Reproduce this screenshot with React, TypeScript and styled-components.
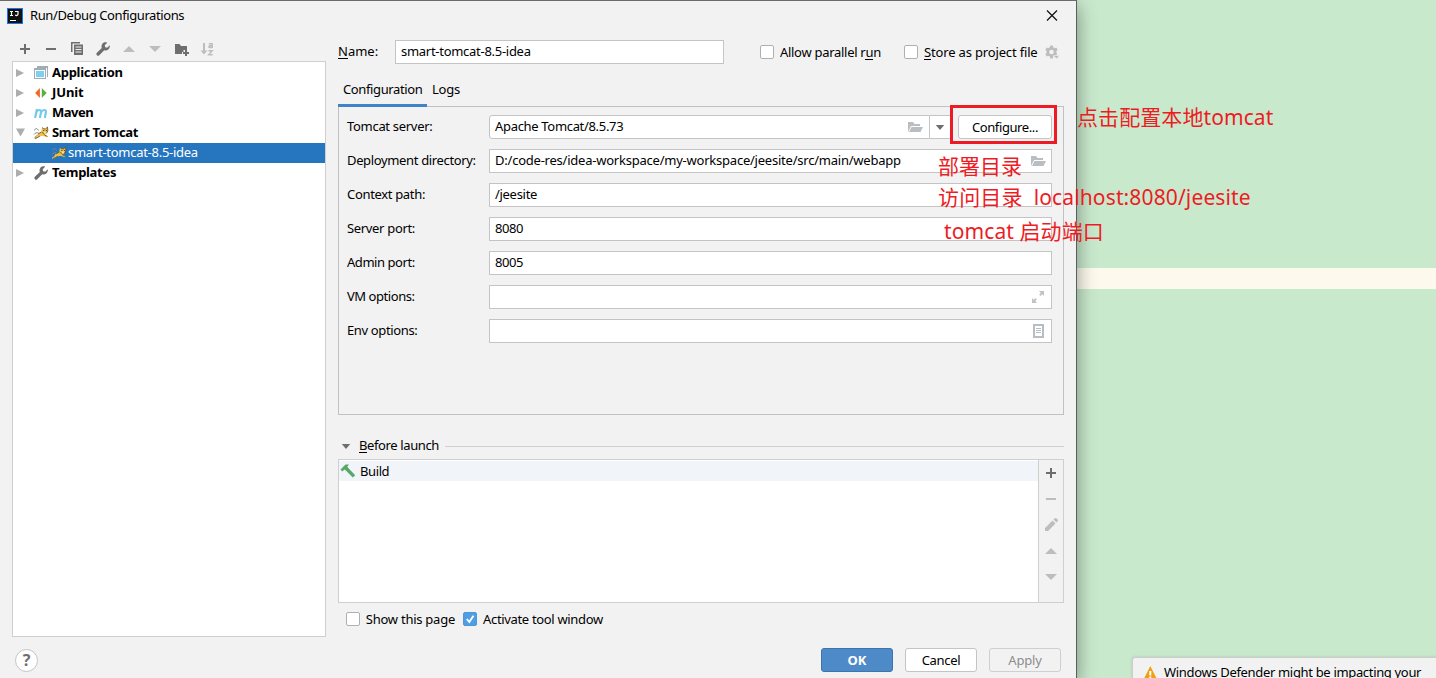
import React from "react";
import styled, { createGlobalStyle } from "styled-components";

const GlobalStyle = createGlobalStyle`
  * { box-sizing: border-box; }
  body {
    margin: 0;
    overflow: hidden;
    background: #c9e9cd;
    color: #000;
    font: 13px/20px "Noto Sans", "Noto Sans CJK SC", sans-serif;
  }
`;

const Screen = styled.div`
  position: relative;
  width: 1436px;
  height: 678px;
  overflow: hidden;
  background: linear-gradient(#fdf9ec, #fdf9ec) 0 268px / 100% 21px no-repeat #c9e9cd;
`;

const Dialog = styled.div`
  display: flex;
  flex-direction: column;
  width: 1077px;
  height: 678px;
  background: #f2f2f2;
  border-top: 1px solid #6b6b6b;
  border-right: 1px solid #566259;
  box-shadow: 0 6px 18px rgba(0, 0, 0, 0.42);
`;

const Text = styled.span<{ $ls?: number; $up?: boolean }>`
  white-space: pre;
  letter-spacing: ${(p) => p.$ls ?? -0.3}px;
  padding-bottom: ${(p) => (p.$up ? 2 : 0)}px;
  u { text-decoration: none; box-shadow: inset 0 -1px #000; display: inline-block; line-height: 15px; }
`;

const TitleBar = styled.div`
  display: flex;
  align-items: center;
  height: 29px;
  flex: none;
  padding: 0 18px 0 7px;
  gap: 7px;
  svg:last-child { margin-left: auto; }
`;

const Main = styled.div`
  display: flex;
  flex: none;
  height: 607px;
  padding-left: 12px;
  gap: 12px;
`;

const Sidebar = styled.div`
  width: 314px;
`;

const Toolbar = styled.div`
  display: flex;
  align-items: center;
  gap: 10px;
  height: 31px;
  padding: 7px 0 0 5px;
`;

const Tree = styled.div`
  height: 576px;
  padding-top: 1px;
  background: #fff;
  border: 1px solid #cfcfcf;
`;

const TreeRow = styled.div<{ $selected?: boolean; $bold?: boolean }>`
  display: flex;
  align-items: center;
  height: 20px;
  padding-left: ${(p) => (p.$selected ? 38 : 2)}px;
  background: ${(p) => (p.$selected ? "#2675bf" : "transparent")};
  color: ${(p) => (p.$selected ? "#fff" : "#000")};
  font-weight: ${(p) => (p.$bold ? 700 : 400)};
`;

const Arrow = styled.span`
  display: flex;
  width: 18px;
`;

const IconSlot = styled.span<{ $w: number; $ml?: number }>`
  display: flex;
  flex: none;
  width: ${(p) => p.$w}px;
  margin-left: ${(p) => p.$ml ?? 0}px;
`;

const Editor = styled.div`
  width: 726px;
  display: flex;
  flex-direction: column;
`;

const NameRow = styled.div`
  display: flex;
  align-items: center;
  height: 24px;
  margin-top: 10px;
  flex: none;
`;

const NameLabel = styled.label`
  display: flex;
  width: 57px;
`;

const Field = styled.div<{ $w?: number; $round?: boolean }>`
  display: flex;
  align-items: center;
  width: ${(p) => p.$w ?? 563}px;
  height: 24px;
  padding: 0 ${(p) => (p.$round ? 6 : 5)}px 0 5px;
  background: #fff;
  border: 1px solid #c4c4c4;
  border-radius: ${(p) => (p.$round ? "3px 0 0 3px" : "0")};
  svg { margin-left: auto; }
`;

const Check = styled.label<{ $w?: number; $ml: number }>`
  display: flex;
  flex: none;
  align-items: center;
  gap: 6px;
  width: ${(p) => (p.$w ? `${p.$w}px` : "auto")};
  margin-left: ${(p) => p.$ml}px;
`;

const Box = styled.span<{ $on?: boolean }>`
  display: flex;
  width: 14px;
  height: 14px;
  border: 1px solid ${(p) => (p.$on ? "#4b97d9" : "#b0b0b0")};
  border-radius: 2px;
  background: ${(p) => (p.$on ? "#4f9ee3" : "#fff")};
`;

const Tabs = styled.div`
  display: flex;
  height: 43px;
  flex: none;
  padding-top: 15px;
`;

const Tab = styled.div<{ $active?: boolean }>`
  position: relative;
  height: 28px;
  width: ${(p) => (p.$active ? 89 : 40)}px;
  padding: 0 0 0 5px;
  border-bottom: ${(p) => (p.$active ? "3px solid #4083c9" : "0")};
`;

const Panel = styled.div`
  flex: none;
  height: 309px;
  margin-top: -1px;
  padding: 8px 11px 0 8px;
  border: 1px solid #c1c1c1;
  display: flex;
  flex-direction: column;
  gap: 10px;
`;

const FormRow = styled.div`
  display: flex;
  align-items: center;
  height: 24px;
`;

const FormLabel = styled.label`
  display: flex;
  width: 142px;
`;

const DropButton = styled.span`
  display: flex;
  width: 23px;
  height: 24px;
  align-items: center;
  padding-left: 5px;
  background: #fff;
  border: 1px solid #c4c4c4;
  border-left: 0;
`;

const Button = styled.button<{ $kind?: "primary" | "disabled"; $w: number }>`
  width: ${(p) => p.$w}px;
  height: 24px;
  padding: 0;
  font: ${(p) => (p.$kind === "primary" ? 700 : 400)} 13px/22px "Noto Sans", sans-serif;
  color: ${(p) => (p.$kind === "primary" ? "#fff" : p.$kind === "disabled" ? "#8c8c8c" : "#000")};
  background: ${(p) => (p.$kind === "primary" ? "#4e8ac8" : p.$kind === "disabled" ? "#f2f2f2" : "#fff")};
  border: 1px solid ${(p) => (p.$kind === "primary" ? "#3d75b1" : p.$kind === "disabled" ? "#cfcfcf" : "#c4c4c4")};
  border-radius: 3px;
`;

const SectionHead = styled.div`
  display: flex;
  align-items: center;
  height: 20px;
  margin-top: 21px;
  flex: none;
  padding-left: 3px;
`;

const Rule = styled.span`
  flex: 1;
  height: 1px;
  margin-left: 6px;
  background: #cfcfcf;
`;

const TaskBox = styled.div`
  display: flex;
  flex: none;
  height: 144px;
  margin-top: 3px;
  border: 1px solid #cfcfcf;
`;

const TaskList = styled.div`
  flex: 1;
  padding-top: 1px;
  background: #fff;
`;

const TaskRow = styled.div`
  display: flex;
  align-items: center;
  height: 20px;
  padding-left: 1px;
  background: #f1f5fa;
`;

const SideTools = styled.div`
  display: flex;
  flex-direction: column;
  align-items: center;
  gap: 10px;
  width: 25px;
  padding-top: 5px;
  border-left: 1px solid #cfcfcf;
`;

const Options = styled.div`
  display: flex;
  align-items: center;
  height: 20px;
  margin-top: 6px;
  flex: none;
`;

const Footer = styled.div`
  display: flex;
  align-items: center;
  gap: 12px;
  height: 24px;
  margin-top: 11px;
  padding: 0 15px;
`;

const Help = styled.span`
  display: flex;
  width: 23px;
  height: 23px;
  margin-right: auto;
  align-items: center;
  justify-content: center;
  border: 1px solid #c4c4c4;
  border-radius: 50%;
  background: #fff;
  color: #6e6e6e;
  font: 700 16px/20px "Noto Sans", sans-serif;
`;

const Note = styled.div<{ $x: number; $y: number; $ls?: number }>`
  position: absolute;
  left: ${(p) => p.$x}px;
  top: ${(p) => p.$y}px;
  color: #ed1c24;
  white-space: pre;
  font: 21px/30px "Noto Sans", "Noto Sans CJK SC", sans-serif;
  letter-spacing: ${(p) => p.$ls ?? 0}px;
`;

const Highlight = styled.div`
  position: absolute;
  left: 950px;
  top: 105px;
  width: 107px;
  height: 39px;
  border: 3px solid #ed1c24;
`;

const Toast = styled.div`
  position: absolute;
  left: 1132px;
  top: 657px;
  width: 320px;
  height: 60px;
  display: flex;
  gap: 6px;
  padding: 4px 0 0 9px;
  background: #f2f2f2;
  border: 1px solid #cdcdcd;
  border-radius: 3px 0 0 0;
  box-shadow: 0 0 3px rgba(0, 0, 0, 0.15);
  svg { margin-top: 3px; }
`;

const G = "#6e6e6e";
const D = "#bdbdbd";

const Svg = ({ s = 16, children }: { s?: number; children: React.ReactNode }) => (
  <svg width={s} height={s} viewBox={`0 0 ${s} ${s}`} style={{ flex: "none", display: "block" }}>
    {children}
  </svg>
);

const Plus = () => (
  <Svg><path d="M7 3h2v4h4v2H9v4H7V9H3V7h4z" fill={G} /></Svg>
);
const Minus = ({ c = G }) => <Svg><path d="M3 7h10v2H3z" fill={c} /></Svg>;
const Up = () => <Svg><path d="M2 11l6-6 6 6z" fill={D} /></Svg>;
const Down = () => <Svg><path d="M2 5h12l-6 6z" fill={D} /></Svg>;
const Copy = () => (
  <Svg>
    <path d="M2 1h9v1.500H3.500V11H2z" fill={G} />
    <path d="M5 3.500h9V14H5zM6.500 5.500v1h6v-1zm0 2.500v1h6V8zm0 2.500v1h6v-1z" fill={G} fillRule="evenodd" />
  </Svg>
);
const Wrench = () => (
  <Svg>
    <path transform="translate(.4 0)" d="M14.300 4.300l-2.500 2.400-2-.5-.5-2L11.800 1.700C10 1 8 1.400 6.900 2.900c-.9 1.200-1 2.700-.5 4L1.500 11.800c-.7.700-.7 1.700 0 2.400.7.700 1.700.7 2.400 0l4.900-4.900c1.300.5 2.900.3 4-.7 1.300-1.100 1.900-2.800 1.500-4.300z" fill={G} />
  </Svg>
);
const NewFolder = () => (
  <Svg>
    <path d="M2 3h4.500L8 5h6v4h-3.500v2H9v2H2z" fill={G} />
    <path d="M12 9h2v2h2v2h-2v2h-2v-2h-2v-2h2z" fill={G} />
  </Svg>
);
const SortAz = () => (
  <Svg>
    <path d="M4 2h2v7.500h2.500L5 13.500 1.500 9.500H4z" fill={D} />
    <path d="M9.800 2.700h3.400v4.200M13.200 4.800h-2.400c-1.200 0-1.200 1.700 0 1.700h2.400M9.500 9.700h3.700l-3.500 4h4" fill="none" stroke={D} strokeWidth="1.400" />
  </Svg>
);
const Collapsed = () => <Svg s={10}><path d="M1 1l8 4-8 4z" fill="#adadad" /></Svg>;
const Expanded = () => <Svg s={10}><path d="M1 .500h9l-4.500 8z" fill="#adadad" /></Svg>;
const AppIcon = () => (
  <Svg>
    <path d="M4 1h11v11h-1V3H4z" fill="#9fadb6" />
    <path d="M1 3h12v11H1zM2 5v8h10V5z" fill="#9fadb6" fillRule="evenodd" />
    <path d="M3 6h8v6H3z" fill="#7fd0ee" />
  </Svg>
);
const JUnit = () => (
  <Svg><path d="M6.900 3v10l-4.700-5z" fill="#f26522" /><path d="M8.800 3v10l4.900-5z" fill="#59b03c" /></Svg>
);
const Maven = () => (
  <Svg>
    <path d="M2.100 13L3.900 4M3.300 7.500C4.500 4.500 8.600 4 8 7.200L6.900 13M8 7.500C9.200 4.500 13.500 4 12.900 7.200L11.800 13" fill="none" stroke="#74cbe9" strokeWidth="2.200" />
  </Svg>
);
const Tomcat = () => (
  <Svg>
    <path d="M5.500 5.500C4 2.500 2 3.500 1.500 5.500M1 9.500c1.500-2 3-2 4.500-1.500M1.500 12.500l2.500-2" fill="none" stroke="#858585" />
    <path d="M9 2.500l1.700 1.300h2L14.500 2l.3 3.800-1.300 2.500-2 .9 3 2-.5 1-4.500-1.500-3 .8-3 2-2.500.3v-1l2.500-1.500 1-2.300 3.700-2z" fill="#eec04f" />
    <path d="M9 2.500l1.700 1.300h2L14.500 2l.3 3.800-1.300 2.500M2 13.500l2.500-1 2.300-1.300M5 9l3.500-2M11 9.500l3.500 2M9 7.500l2 1" fill="none" stroke="#5d4c22" strokeWidth=".8" />
    <path d="M10.300 5h1v1h-1zm2.600 0h1v1h-1z" fill="#453a20" />
    <path d="M11 6.800h2v1h-2z" fill="#fff2b8" />
  </Svg>
);
const Folder = () => (
  <Svg>
    <path d="M1 13V3h5l1.500 2H13v2H4z" fill="#b9bec2" />
    <path d="M4.500 8H16l-2.500 5H2z" fill="#b9bec2" />
  </Svg>
);
const SmallDown = () => <Svg s={10}><path d="M.8 3h8.400L5 8z" fill={G} /></Svg>;
const Expand = () => (
  <Svg>
    <path d="M9 2h5v5l-1.700-1.700L10.500 7 9.200 5.700 10.800 4z" fill="#bfc3c6" />
    <path d="M2 9l1.700 1.700L5.500 9l1.300 1.300L5.300 12 7 14H2z" fill="#bfc3c6" />
  </Svg>
);
const Doc = () => (
  <Svg>
    <path d="M3 1h11v14H3zM5 3v10h7V3z" fill="#b6bdc4" fillRule="evenodd" />
    <path d="M6 5h5v1H6zm0 2h5v1H6zm0 2h5v1H6z" fill="#b6bdc4" />
  </Svg>
);
const Gear = () => (
  <Svg>
    <circle cx="7.500" cy="8" r="3.700" fill="none" stroke={D} strokeWidth="2.800" />
    <path d="M7.500 1.500v3M7.500 11.500v3M2 4.700l2.500 1.500M10.500 9.800l2 1.200M2 11.300l2.500-1.500M10.500 6.200L13 4.700" stroke={D} strokeWidth="2.800" />
    <path d="M9.500 11.500h6L12.500 15z" fill={D} stroke="#f2f2f2" strokeWidth=".6" />
  </Svg>
);
const Hammer = () => (
  <Svg>
    <path d="M.5 6.500L5.500 1.500H9L7.300 3.700l1 1.300 6.900 7.200-2.400 2.400-7-7L4.500 6.600 2.300 8.500z" fill="#59a869" />
  </Svg>
);
const Pencil = () => (
  <Svg>
    <path d="M2 11l7.500-7.500 3 3L5 14H2zM10.500 2.500L12 1.200c.4-.4.900-.4 1.300 0l1.500 1.500c.4.400.4.900 0 1.300L13.500 5.500z" fill={D} />
  </Svg>
);
const Logo = () => (
  <Svg>
    <path d="M0 0h16v16H0z" fill="#1479e8" />
    <path d="M1 1h14v14H1z" fill="#111" />
    <path d="M3 3.500h3M4.500 3.500v4M3 7.500h3M8 3.500h3v2.800c0 1.200-1.600 1.600-2.800.8M3 12.500h6" fill="none" stroke="#fff" strokeWidth="1.200" />
  </Svg>
);
const Close = () => (
  <Svg s={12}><path d="M1 .500l10 10M11 .500L1 10.500" stroke="#111" strokeWidth="1.200" /></Svg>
);
const Warning = () => (
  <Svg>
    <path d="M8.300 1l7 14h-14z" fill="#eea115" />
    <path d="M7.300 6h2v4.500h-2zm0 5.500h2v2h-2z" fill="#fff" />
  </Svg>
);
const Tick = () => (
  <Svg s={12}><path d="M2.800 6l2.500 3L9.500 2.800" fill="none" stroke="#fff" strokeWidth="1.900" /></Svg>
);

const groups = [
  { name: "Application", icon: <AppIcon />, ls: -0.28 },
  { name: "JUnit", icon: <JUnit />, ls: -0.1 },
  { name: "Maven", icon: <Maven />, ls: -0.5 },
  { name: "Smart Tomcat", icon: <Tomcat />, ls: -0.32, open: true },
];

const fields = [
  { label: "Deployment directory:", ls: -0.35, value: "D:/code-res/idea-workspace/my-workspace/jeesite/src/main/webapp", vls: -0.227, icon: <Folder /> },
  { label: "Context path:", ls: -0.33, value: "/jeesite" },
  { label: "Server port:", ls: -0.33, value: "8080", vls: -0.4 },
  { label: "Admin port:", ls: -0.45, value: "8005", vls: -0.4 },
  { label: "VM options:", ls: -0.45, value: "", icon: <Expand /> },
  { label: "Env options:", ls: -0.36, value: "", icon: <Doc /> },
];

export default function App() {
  return (
    <Screen>
      <GlobalStyle />
      <Dialog>
        <TitleBar>
          <Logo />
          <Text $up $ls={-0.4}>Run/Debug Configurations</Text>
          <Close />
        </TitleBar>
        <Main>
          <Sidebar>
            <Toolbar>
              <Plus /><Minus /><Copy /><Wrench /><Up /><Down /><NewFolder /><SortAz />
            </Toolbar>
            <Tree>
              {groups.map((g) => (
                <TreeRow key={g.name} $bold>
                  <Arrow>{g.open ? <Expanded /> : <Collapsed />}</Arrow>
                  <IconSlot $w={19}>{g.icon}</IconSlot>
                  <Text $up $ls={g.ls}>{g.name}</Text>
                </TreeRow>
              ))}
              <TreeRow $selected>
                <IconSlot $w={17}><Tomcat /></IconSlot>
                <Text $up $ls={-0.27}>smart-tomcat-8.5-idea</Text>
              </TreeRow>
              <TreeRow $bold>
                <Arrow><Collapsed /></Arrow>
                <IconSlot $w={19}><Wrench /></IconSlot>
                <Text $up>Templates</Text>
              </TreeRow>
            </Tree>
          </Sidebar>
          <Editor>
            <NameRow>
              <NameLabel><Text $up $ls={0}><u>N</u>ame:</Text></NameLabel>
              <Field $w={329}><Text $up $ls={-0.28}>smart-tomcat-8.5-idea</Text></Field>
              <Check $ml={36} $w={121}><Box /><Text $ls={-0.28}>Allow parallel r<u>u</u>n</Text></Check>
              <Check $ml={23} $w={140}><Box /><Text $ls={-0.16}><u>S</u>tore as project file</Text></Check>
              <IconSlot $w={16}><Gear /></IconSlot>
            </NameRow>
            <Tabs>
              <Tab $active><Text $ls={-0.38}>Configuration</Text></Tab>
              <Tab><Text $ls={-0.25}>Logs</Text></Tab>
            </Tabs>
            <Panel>
              <FormRow>
                <FormLabel><Text $up>Tomcat server:</Text></FormLabel>
                <Field $w={441} $round><Text $up $ls={-0.32}>Apache Tomcat/8.5.73</Text><Folder /></Field>
                <DropButton><SmallDown /></DropButton>
                <IconSlot $w={5} />
                <Button $w={94}><Text $ls={-0.4}>Configure...</Text></Button>
              </FormRow>
              {fields.map((f) => (
                <FormRow key={f.label}>
                  <FormLabel><Text $up $ls={f.ls}>{f.label}</Text></FormLabel>
                  <Field><Text $up $ls={f.vls}>{f.value}</Text>{f.icon}</Field>
                </FormRow>
              ))}
            </Panel>
            <SectionHead>
              <IconSlot $w={18}><SmallDown /></IconSlot>
              <Text $up $ls={-0.38}><u>B</u>efore launch</Text>
              <Rule />
            </SectionHead>
            <TaskBox>
              <TaskList>
                <TaskRow><IconSlot $w={20}><Hammer /></IconSlot><Text $ls={-0.4}>Build</Text></TaskRow>
              </TaskList>
              <SideTools>
                <Plus /><Minus c={D} /><Pencil /><Up /><Down />
              </SideTools>
            </TaskBox>
            <Options>
              <Check $ml={8} $w={109}><Box /><Text $ls={-0.25}>Show this page</Text></Check>
              <Check $ml={8}><Box $on><Tick /></Box><Text $ls={-0.33}>Activate tool window</Text></Check>
            </Options>
          </Editor>
        </Main>
        <Footer>
          <Help>?</Help>
          <Button $w={72} $kind="primary">OK</Button>
          <Button $w={72}><Text>Cancel</Text></Button>
          <Button $w={72} $kind="disabled"><Text $ls={-0.2}>Apply</Text></Button>
        </Footer>
      </Dialog>
      <Highlight />
      <Note $x={1077} $y={102} $ls={0.08}>点击配置本地tomcat</Note>
      <Note $x={938} $y={151}>部署目录</Note>
      <Note $x={938} $y={182} $ls={0.13}>访问目录  localhost:8080/jeesite</Note>
      <Note $x={944} $y={216} $ls={0.1}>tomcat 启动端口</Note>
      <Toast>
        <Warning />
        <Text $ls={-0.33}>Windows Defender might be impacting your</Text>
      </Toast>
    </Screen>
  );
}
